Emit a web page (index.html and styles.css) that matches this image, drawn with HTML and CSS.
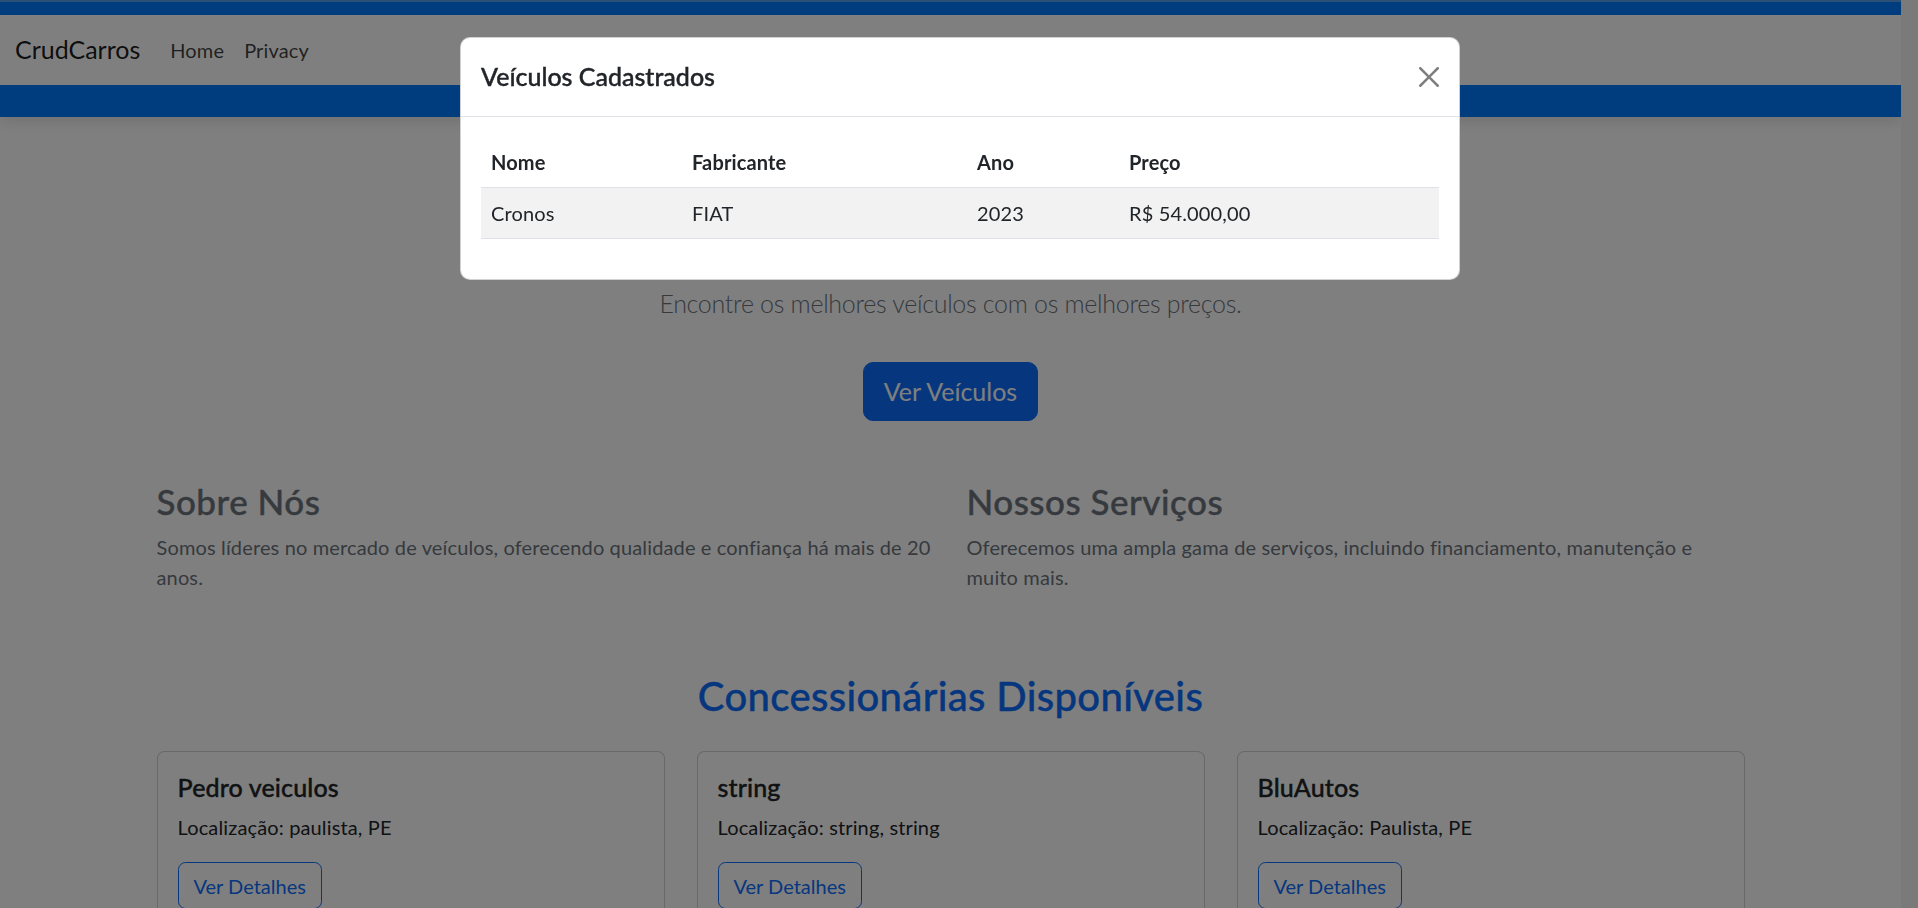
FILE: index.html
```html
<!DOCTYPE html>
<html lang="pt-BR">
<head>
<meta charset="utf-8">
<title>Home Page - CrudCarros</title>
<link rel="stylesheet" href="styles.css">
</head>
<body>
<header class="site-header">
  <nav class="navbar">
    <a class="brand" href="#">CrudCarros</a>
    <ul class="nav">
      <li><a class="nav-link" href="#">Home</a></li>
      <li><a class="nav-link" href="#">Privacy</a></li>
    </ul>
  </nav>
</header>

<main class="container">
  <section class="hero">
    <p class="lead">Encontre os melhores veículos com os melhores preços.</p>
    <div class="hero-actions">
      <a class="btn btn-primary btn-lg" href="#">Ver Veículos</a>
    </div>
  </section>

  <section class="about">
    <div class="about-col">
      <h3 class="about-title">Sobre Nós</h3>
      <p class="about-text">Somos líderes no mercado de veículos, oferecendo qualidade e confiança há mais de 20 anos.</p>
    </div>
    <div class="about-col">
      <h3 class="about-title">Nossos Serviços</h3>
      <p class="about-text">Oferecemos uma ampla gama de serviços, incluindo financiamento, manutenção e muito mais.</p>
    </div>
  </section>

  <section class="dealers">
    <h2 class="dealers-title">Concessionárias Disponíveis</h2>
    <div class="cards">
      <div class="card-col">
        <div class="card">
          <div class="card-body">
            <h5 class="card-title">Pedro veiculos</h5>
            <p class="card-text">Localização: paulista, PE</p>
            <a class="btn btn-outline" href="#">Ver Detalhes</a>
          </div>
        </div>
      </div>
      <div class="card-col">
        <div class="card">
          <div class="card-body">
            <h5 class="card-title">string</h5>
            <p class="card-text">Localização: string, string</p>
            <a class="btn btn-outline" href="#">Ver Detalhes</a>
          </div>
        </div>
      </div>
      <div class="card-col">
        <div class="card">
          <div class="card-body">
            <h5 class="card-title">BluAutos</h5>
            <p class="card-text">Localização: Paulista, PE</p>
            <a class="btn btn-outline" href="#">Ver Detalhes</a>
          </div>
        </div>
      </div>
    </div>
  </section>
</main>

<div class="modal-backdrop"></div>
<div class="modal">
  <div class="modal-dialog">
    <div class="modal-content">
      <div class="modal-header">
        <h5 class="modal-title">Veículos Cadastrados</h5>
        <button class="btn-close" type="button" aria-label="Close">
          <svg viewBox="0 0 16 16" width="20" height="20" aria-hidden="true"><path d="M.293.293a1 1 0 0 1 1.414 0L8 6.586 14.293.293a1 1 0 1 1 1.414 1.414L9.414 8l6.293 6.293a1 1 0 0 1-1.414 1.414L8 9.414l-6.293 6.293a1 1 0 0 1-1.414-1.414L6.586 8 .293 1.707a1 1 0 0 1 0-1.414z"/></svg>
        </button>
      </div>
      <div class="modal-body">
        <table class="table">
          <colgroup>
            <col class="c-nome"><col class="c-fab"><col class="c-ano"><col class="c-preco">
          </colgroup>
          <thead>
            <tr><th>Nome</th><th>Fabricante</th><th>Ano</th><th>Preço</th></tr>
          </thead>
          <tbody>
            <tr><td>Cronos</td><td>FIAT</td><td>2023</td><td>R$ 54.000,00</td></tr>
          </tbody>
        </table>
      </div>
    </div>
  </div>
</div>
</body>
</html>
```
FILE: styles.css
```css
html {
  background: #f5f5f5;
  overflow: hidden;
}
body {
  margin: 0 17px 0 0;
  min-height: 1100px;
  background: #fff;
  font-family: "Lato", "Open Sans", sans-serif;
  font-size: 20px;
  line-height: 30px;
  letter-spacing: 0.14px;
  color: #212529;
}
h1, h2, h3, h5, p { margin: 0; }
a { text-decoration: none; }

/* header / navbar */
.site-header {
  position: relative;
  z-index: 1;
  background: #007bff;
  border-top: 2px solid #5aa0ee;
  padding: 13px 0 32px;
  box-shadow: 0 4px 14px rgba(0, 0, 0, 0.12);
}
.navbar {
  height: 70px;
  background: #fff;
  display: flex;
  align-items: center;
  padding: 0 15px;
}
.brand {
  font-size: 25px;
  line-height: 37.5px;
  padding: 6.25px 0;
  margin-right: 20px;
  color: rgba(0, 0, 0, 0.9);
  letter-spacing: 0;
}
.nav {
  display: flex;
  list-style: none;
  margin: 0;
  padding: 0;
}
.nav-link {
  display: block;
  padding: 10px;
  color: rgba(0, 0, 0, 0.75);
}

/* container */
.container {
  width: 1650px;
  margin: 0 auto;
  padding: 0 15px;
  box-sizing: border-box;
}

/* hero */
.hero {
  text-align: center;
  padding-top: 168px;
}
.lead {
  font-size: 25px;
  line-height: 37.5px;
  font-weight: 300;
  letter-spacing: -0.3px;
  color: #6c757d;
  margin-bottom: 39px;
}
.hero-actions {
  display: flex;
  justify-content: center;
}
.btn {
  display: inline-block;
  border: 1px solid #0d6efd;
  letter-spacing: 0;
}
.btn-primary {
  background: #0d6efd;
  color: #fff;
}
.btn-lg {
  padding: 10px 20px;
  font-size: 25px;
  line-height: 37.5px;
  border-radius: 10px;
}
.btn-outline {
  padding: 7.5px 15px;
  color: #0d6efd;
  background: transparent;
  border-radius: 7.5px;
}

/* shared heading weight (medium) */
.about-title,
.dealers-title,
.card-title,
.modal-title {
  font-weight: 500;
  -webkit-text-stroke: 0.4px currentColor;
}

/* about */
.about {
  display: grid;
  grid-template-columns: 1fr 1fr;
  margin-top: 59px;
  color: #6c757d;
}
.about-col {
  padding: 0 16px;
}
.about-title {
  font-size: 35px;
  line-height: 42px;
  letter-spacing: 0.5px;
  margin-bottom: 10px;
}
.about-text {
  margin-bottom: 20px;
}

/* dealers */
.dealers {
  margin-top: 60px;
}
.dealers-title {
  text-align: center;
  font-size: 40px;
  line-height: 48px;
  letter-spacing: 0.35px;
  color: #0d6efd;
  margin-bottom: 31px;
}
.cards {
  display: grid;
  grid-template-columns: repeat(3, 1fr);
}
.card-col {
  padding: 0 16px;
}
.card {
  background: #fff;
  border: 1px solid rgba(0, 0, 0, 0.175);
  border-radius: 7.5px;
  min-height: 200px;
}
.card-body {
  padding: 20px;
}
.card-title {
  font-size: 25px;
  line-height: 30px;
  margin-bottom: 10px;
}
.card-text {
  margin-bottom: 20px;
}

/* modal */
.modal-backdrop {
  position: fixed;
  inset: 0;
  z-index: 10;
  background: rgba(0, 0, 0, 0.5);
}
.modal {
  position: fixed;
  inset: 0;
  z-index: 11;
  display: flex;
  justify-content: center;
  align-items: flex-start;
  padding: 37px 0 0 2px;
}
.modal-dialog {
  width: 1000px;
}
.modal-content {
  background: #fff;
  border: 1px solid rgba(0, 0, 0, 0.175);
  border-radius: 10px;
}
.modal-header {
  display: flex;
  align-items: center;
  justify-content: space-between;
  padding: 20px;
  border-bottom: 1px solid #dee2e6;
}
.modal-title {
  font-size: 25px;
  line-height: 37.5px;
  letter-spacing: 0;
}
.btn-close {
  display: flex;
  border: 0;
  padding: 0;
  background: none;
  opacity: 0.5;
}
.btn-close svg {
  display: block;
  fill: #000;
}
.modal-body {
  padding: 20px;
}
.table {
  width: 100%;
  table-layout: fixed;
  border-collapse: collapse;
  margin-bottom: 20px;
}
.c-nome { width: 201px; }
.c-fab { width: 285px; }
.c-ano { width: 152px; }
.c-preco { width: 320px; }
.table th,
.table td {
  padding: 10px;
  text-align: left;
  border-bottom: 1px solid #dee2e6;
}
.table th {
  font-weight: 700;
}
.table tbody tr:nth-child(odd) td {
  background: rgba(0, 0, 0, 0.05);
}
```
